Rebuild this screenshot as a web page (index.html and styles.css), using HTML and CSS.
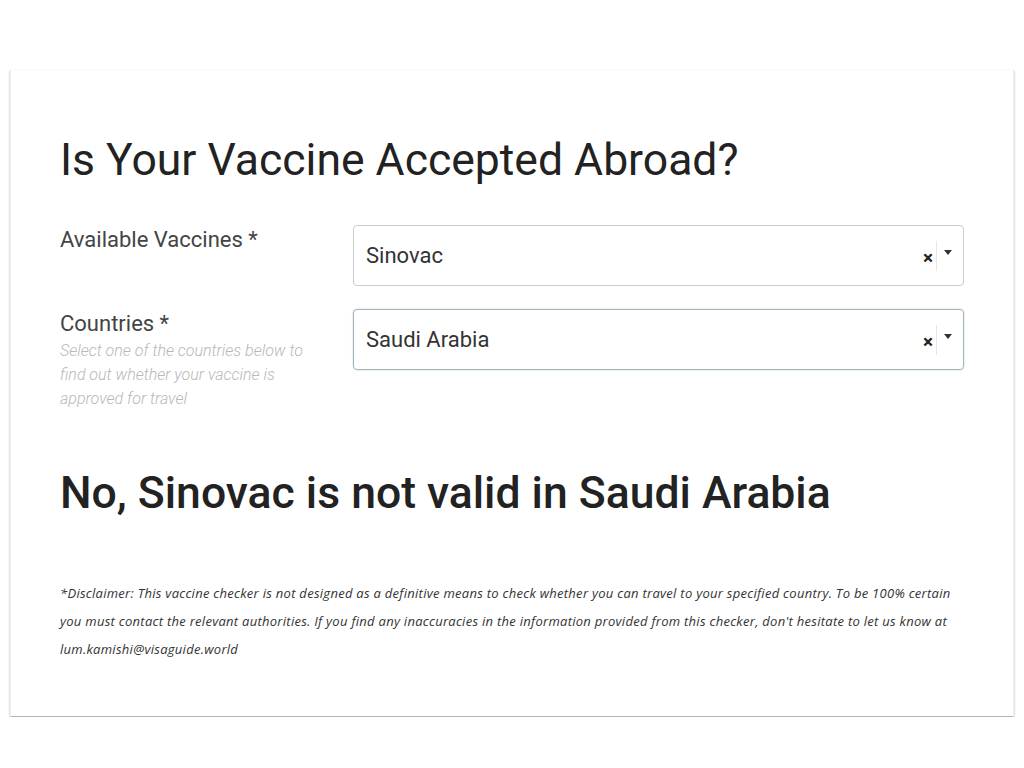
FILE: index.html
```html
<!DOCTYPE html>
<html lang="en">
<head>
    <meta charset="UTF-8">
    <meta name="viewport" content="width=device-width, initial-scale=1.0">
    <title>Vaccine Checker</title>
    <link rel="stylesheet" href="styles.css">
</head>
<body>

<div class="checker-card">
    <h1>Is Your Vaccine Accepted Abroad?</h1>

    <!-- Vaccine select -->
    <div class="field">
        <div class="field-label">
            <label>Available Vaccines *</label>
        </div>
        <div class="select-box">
            <span class="select-value">Sinovac</span>
            <span class="select-clear">&times;</span>
            <span class="select-sep"></span>
            <span class="select-arrow"></span>
        </div>
    </div>

    <!-- Country select -->
    <div class="field">
        <div class="field-label">
            <label>Countries *</label>
            <p class="field-help">Select one of the countries below to find out whether your vaccine is approved for travel</p>
        </div>
        <div class="select-box focused">
            <span class="select-value">Saudi Arabia</span>
            <span class="select-clear">&times;</span>
            <span class="select-sep"></span>
            <span class="select-arrow"></span>
        </div>
    </div>

    <h2 class="result">No, Sinovac is not valid in Saudi Arabia</h2>

    <p class="disclaimer">*Disclaimer: This vaccine checker is not designed as a definitive means to check whether you can travel to your specified country. To be 100% certain you must contact the relevant authorities. If you find any inaccuracies in the information provided from this checker, don't hesitate to let us know at lum.kamishi@visaguide.world</p>
</div>

</body>
</html>
```

FILE: styles.css
```css
body {
    margin: 0;
    background-color: #fff;
    font-family: Roboto, "Liberation Sans", sans-serif;
    color: #333;
}

.checker-card {
    margin: 70px 10px 0;
    padding: 64px 49px 53px;
    background-color: #fff;
    border-left: 1px solid #f0f0f0;
    border-right: 1px solid #f0f0f0;
    border-bottom: 1px solid #b5b5b5;
    box-shadow: 0 1px 2px rgba(0, 0, 0, 0.35);
}

.checker-card h1 {
    margin: 0 0 39px;
    font-size: 44.5px;
    font-weight: 400;
    line-height: 52px;
    color: #222;
}

.field {
    display: grid;
    grid-template-columns: 293px 1fr;
    align-items: start;
    margin-bottom: 23px;
}

.field-label label {
    display: block;
    font-size: 22px;
    line-height: 30px;
    color: #444;
}

.field-help {
    margin: 0;
    max-width: 262px;
    font-size: 16px;
    font-style: italic;
    font-weight: 300;
    line-height: 24px;
    color: #b8b8b8;
}

.select-box {
    display: flex;
    align-items: center;
    height: 59px;
    padding: 0 11px 0 12px;
    border: 1px solid #ccc;
    border-radius: 4px;
}

.select-box.focused {
    border-color: #a3b4ba;
    box-shadow: 0 0 2px rgba(120, 150, 160, 0.4);
}

.select-value {
    flex: 1;
    font-size: 22px;
    color: #333;
}

.select-clear {
    font-size: 19px;
    font-weight: 700;
    color: #222;
    margin-top: 4px;
}

.select-sep {
    width: 1px;
    height: 30px;
    margin: 0 7px 0 3px;
    background-color: #e6e6e6;
}

.select-arrow {
    width: 0;
    height: 0;
    margin-bottom: 6px;
    border-left: 4px solid transparent;
    border-right: 4px solid transparent;
    border-top: 5px solid #333;
}

.result {
    margin: 56px 0 60px;
    font-size: 44.5px;
    font-weight: 500;
    line-height: 52px;
    color: #222;
}

.disclaimer {
    margin: 0;
    font-family: "Open Sans", sans-serif;
    font-size: 13px;
    font-style: italic;
    letter-spacing: 0.28px;
    line-height: 28px;
    color: #333;
}
```
